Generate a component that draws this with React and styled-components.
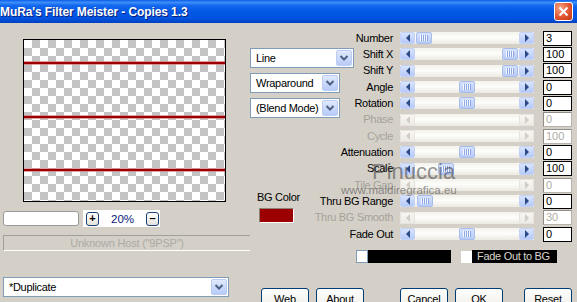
import React from "react";
import styled, { createGlobalStyle } from "styled-components";

const GlobalStyle = createGlobalStyle`
  html, body {
    margin: 0;
    padding: 0;
    background: #d4d0c8;
  }
  body {
    font-family: "Liberation Sans", Arial, sans-serif;
    font-size: 11px;
    color: #000;
  }
  * {
    box-sizing: border-box;
  }
`;

const SLIDERS = [
  { label: "Number", value: "3", pos: 0.012 },
  { label: "Shift X", value: "100", pos: 0.99 },
  { label: "Shift Y", value: "100", pos: 0.99 },
  { label: "Angle", value: "0", pos: 0.5 },
  { label: "Rotation", value: "0", pos: 0.5 },
  { label: "Phase", value: "0", disabled: true },
  { label: "Cycle", value: "100", disabled: true },
  { label: "Attenuation", value: "0", pos: 0.5 },
  { label: "Scale", value: "100", pos: 0.26 },
  { label: "Tile Gap", value: "0", disabled: true },
  { label: "Thru BG Range", value: "0", pos: 0.023 },
  { label: "Thru BG Smooth", value: "30", disabled: true },
  { label: "Fade Out", value: "0", pos: 0.5 },
];

const PREVIEW_LINES = [23, 77, 130];

const Window = styled.div`
  position: relative;
  width: 577px;
  height: 302px;
  overflow: hidden;
  background: #d4d0c8;
  display: flex;
  flex-direction: column;
`;

const TitleBar = styled.div`
  flex: none;
  height: 23px;
  display: flex;
  align-items: center;
  justify-content: space-between;
  padding-right: 4px;
  background: linear-gradient(
    #0a5be8 0%,
    #3d8ff9 10%,
    #1468ee 24%,
    #0358e6 50%,
    #0052de 82%,
    #0040c0 100%
  );
  color: #fff;
  font-weight: bold;
  font-size: 12px;
  letter-spacing: -0.1px;
  text-shadow: 1px 1px #0a1e7a;
  white-space: nowrap;
`;

const CloseButton = styled.div`
  width: 19px;
  height: 19px;
  border: 1px solid #fff;
  border-radius: 3px;
  background: radial-gradient(circle at 30% 30%, #f3a584, #e2532f 55%, #c03916);
  display: flex;
  align-items: center;
  justify-content: center;
`;

const Body = styled.div`
  flex: 1;
  display: flex;
`;

const LeftCol = styled.div`
  flex: none;
  width: 250px;
  padding-left: 3px;
  display: flex;
  flex-direction: column;
`;

const PreviewCanvas = styled.svg`
  display: block;
  margin: 16px 0 0 20px;
`;

const ZoomRow = styled.div`
  display: flex;
  align-items: center;
  height: 17px;
  margin-top: 8px;
`;

const ZoomInput = styled.div`
  width: 76px;
  height: 15px;
  background: #fff;
  border: 1px solid #9a9a9a;
  border-radius: 3px;
`;

const ZoomPad = styled.div`
  display: flex;
  align-items: center;
  width: 77px;
  height: 17px;
  margin-left: 4px;
  padding: 0 1px 0 3px;
  background: #fff;
`;

const ZoomButton = styled.div`
  width: 13px;
  height: 14px;
  border: 1px solid #1c3f73;
  border-radius: 3px;
  background: linear-gradient(#fff, #e4e3dc);
  display: flex;
  align-items: center;
  justify-content: center;
  font-weight: bold;
  font-size: 11px;
  line-height: 1;
`;

const ZoomValue = styled.span`
  flex: 1;
  text-align: center;
  color: #0a1a80;
  font-size: 11.5px;
`;

const StatusBar = styled.div`
  height: 16px;
  margin-top: 8px;
  border-top: 1px solid #a3a09a;
  border-left: 1px solid #a3a09a;
  border-bottom: 1px solid #fff;
  display: flex;
  align-items: center;
  justify-content: center;
  color: #acaaa5;
  letter-spacing: -0.2px;
`;

const Combo = styled.div`
  display: flex;
  align-items: center;
  width: ${(p) => p.$width}px;
  height: 20px;
  margin-top: ${(p) => p.$top || 0}px;
  background: #fff;
  border: 1px solid #7f9db9;
  padding: 1px;
`;

const ComboText = styled.span`
  flex: 1;
  padding-left: 4px;
  letter-spacing: -0.3px;
  white-space: nowrap;
`;

const ComboArrow = styled.div`
  width: 16px;
  height: 16px;
  border: 1px solid #bccbf1;
  border-radius: 2px;
  background: linear-gradient(#e0e9fd, #b7cbf8);
  display: flex;
  align-items: center;
  justify-content: center;
`;

const RightCol = styled.div`
  flex: 1;
  display: flex;
  flex-direction: column;
`;

const ControlArea = styled.div`
  display: grid;
  margin-top: 7px;
  & > * {
    grid-area: 1 / 1;
  }
`;

const SideControls = styled.div`
  display: flex;
  flex-direction: column;
  align-items: flex-start;
  padding-top: 18px;
`;

const ColorLabel = styled.span`
  margin: 73px 0 0 7px;
  line-height: 13px;
  letter-spacing: -0.3px;
`;

const ColorSwatch = styled.div`
  width: 35px;
  height: 15px;
  margin: 4px 0 0 9px;
  background: ${(p) => p.$color};
  border: 1px solid #8a8478;
  border-right-color: #fff;
  border-bottom-color: #fff;
`;

const SliderList = styled.div`
  display: flex;
  flex-direction: column;
`;

const SliderRow = styled.div`
  display: grid;
  grid-template-columns: 150px 143px 29px;
  align-items: center;
  height: 16.33px;
`;

const SliderLabel = styled.span`
  justify-self: end;
  padding-right: 7px;
  line-height: 13px;
  white-space: nowrap;
  letter-spacing: -0.3px;
  color: ${(p) => (p.$disabled ? "#a5a29b" : "#000")};
`;

const ScrollBar = styled.div`
  display: flex;
  width: 134px;
  height: 12px;
  background: linear-gradient(#f3f2ec, #fdfdfb 45%, #ebe9e1);
`;

const ScrollArrow = styled.div`
  flex: none;
  width: 15px;
  height: 12px;
  border: 1px solid ${(p) => (p.$disabled ? "#e6e4dc" : "#c3d2f6")};
  border-radius: 2px;
  background: ${(p) =>
    p.$disabled
      ? "linear-gradient(#f7f6f2, #ecebe5)"
      : "linear-gradient(#d9e4fd, #b6caf8)"};
  display: flex;
  align-items: center;
  justify-content: center;
`;

const ScrollTrack = styled.div`
  position: relative;
  flex: 1;
`;

const Thumb = styled.div`
  position: absolute;
  top: 0;
  width: 16px;
  height: 12px;
  border: 1px solid #a9bdec;
  border-radius: 2px;
  background: linear-gradient(#d6e2fd, #b8ccf8);
  display: flex;
  align-items: center;
  justify-content: center;
  &::after {
    content: "";
    width: 8px;
    height: 6px;
    background: repeating-linear-gradient(90deg, #f4f7ff 0 1px, #8ca6e2 1px 2px);
  }
`;

const ValueBox = styled.div`
  height: 15px;
  background: #fff;
  border: 1px solid ${(p) => (p.$disabled ? "#b5b3ab" : "#000")};
  border-top-color: ${(p) => (p.$disabled ? "#8f8d86" : "#000")};
  border-left-color: ${(p) => (p.$disabled ? "#8f8d86" : "#000")};
  padding-left: 2px;
  line-height: 13px;
  color: ${(p) => (p.$disabled ? "#aeaca4" : "#000")};
`;

const FadeRow = styled.div`
  display: flex;
  align-items: center;
  height: 13px;
  margin-top: 8px;
  padding-left: 106px;
`;

const FadeBar = styled.div`
  width: 95px;
  height: 13px;
  background: #000;
`;

const FadeMark = styled.div`
  width: 12px;
  height: 13px;
  background: #fff;
  border: 1px solid #7f9db9;
`;

const CheckBox = styled.div`
  width: 11px;
  height: 12px;
  margin-left: 10px;
  background: #fff;
`;

const CheckLabel = styled.span`
  height: 13px;
  padding: 0 7px 0 5px;
  background: #000;
  color: #d8d5cd;
  line-height: 13px;
  letter-spacing: -0.3px;
  white-space: nowrap;
`;

const ButtonRow = styled.div`
  display: flex;
  margin-top: 25px;
  padding-left: 11px;
`;

const Button = styled.div`
  flex: none;
  width: 48px;
  height: 23px;
  margin-left: ${(p) => p.$gap || 0}px;
  border: 1px solid #003c74;
  border-radius: 3px;
  background: linear-gradient(#ffffff, #f2f1ec 70%, #dcd8cd);
  display: flex;
  justify-content: center;
  padding-top: 4px;
  letter-spacing: -0.2px;
`;

const Watermark = styled.span`
  position: absolute;
  left: ${(p) => p.$x}px;
  top: ${(p) => p.$y}px;
  font-size: ${(p) => p.$size}px;
  line-height: 1;
  color: rgba(60, 60, 60, 0.55);
  white-space: nowrap;
  pointer-events: none;
`;

const ChevronIcon = () => (
  <svg width="10" height="8" viewBox="0 0 10 8">
    <path d="M1.5 2 L5 5.5 L8.5 2" fill="none" stroke="#4d6185" strokeWidth="2" />
  </svg>
);

const ArrowIcon = ({ dir, disabled }) => (
  <svg width="6" height="8" viewBox="0 0 6 8">
    <path
      d={dir === "left" ? "M5 0 L1 4 L5 8 Z" : "M1 0 L5 4 L1 8 Z"}
      fill={disabled ? "#cfcdc4" : "#2c4a86"}
    />
  </svg>
);

const ComboBox = ({ width, top, children }) => (
  <Combo $width={width} $top={top}>
    <ComboText>{children}</ComboText>
    <ComboArrow>
      <ChevronIcon />
    </ComboArrow>
  </Combo>
);

const Slider = ({ label, value, pos, disabled }) => (
  <SliderRow>
    <SliderLabel $disabled={disabled}>{label}</SliderLabel>
    <ScrollBar>
      <ScrollArrow $disabled={disabled}>
        <ArrowIcon dir="left" disabled={disabled} />
      </ScrollArrow>
      <ScrollTrack>
        {!disabled && <Thumb style={{ left: Math.round(pos * 88) }} />}
      </ScrollTrack>
      <ScrollArrow $disabled={disabled}>
        <ArrowIcon dir="right" disabled={disabled} />
      </ScrollArrow>
    </ScrollBar>
    <ValueBox $disabled={disabled}>{value}</ValueBox>
  </SliderRow>
);

const Preview = () => (
  <PreviewCanvas width="203" height="163" viewBox="0 0 203 163">
    <defs>
      <pattern id="checker" x="1" y="1" width="16" height="16" patternUnits="userSpaceOnUse">
        <rect width="16" height="16" fill="#fff" />
        <rect x="8" width="8" height="8" fill="#c3c3c3" />
        <rect y="8" width="8" height="8" fill="#c3c3c3" />
      </pattern>
    </defs>
    <rect x="0.5" y="0.5" width="202" height="162" fill="url(#checker)" stroke="#000" />
    {PREVIEW_LINES.map((y) => (
      <g key={y}>
        <rect x="1" y={y - 1} width="201" height="4" fill="#d77a7a" opacity="0.7" />
        <rect x="1" y={y} width="201" height="2" fill="#9c0000" />
      </g>
    ))}
  </PreviewCanvas>
);

export default function App() {
  return (
    <>
      <GlobalStyle />
      <Window>
        <TitleBar>
          <span>MuRa's Filter Meister - Copies 1.3</span>
          <CloseButton>
            <svg width="11" height="11" viewBox="0 0 11 11">
              <path d="M1.5 1.5 L9.5 9.5 M9.5 1.5 L1.5 9.5" stroke="#fff" strokeWidth="2" />
            </svg>
          </CloseButton>
        </TitleBar>
        <Body>
          <LeftCol>
            <Preview />
            <ZoomRow>
              <ZoomInput />
              <ZoomPad>
                <ZoomButton>+</ZoomButton>
                <ZoomValue>20%</ZoomValue>
                <ZoomButton>–</ZoomButton>
              </ZoomPad>
            </ZoomRow>
            <StatusBar>Unknown Host ("9PSP")</StatusBar>
            <Combo $width={226} $top={26}>
              <ComboText>*Duplicate</ComboText>
              <ComboArrow>
                <ChevronIcon />
              </ComboArrow>
            </Combo>
          </LeftCol>
          <RightCol>
            <ControlArea>
              <SideControls>
                <ComboBox width={104}>Line</ComboBox>
                <ComboBox width={90} top={5}>Wraparound</ComboBox>
                <ComboBox width={90} top={5}>(Blend Mode)</ComboBox>
                <ColorLabel>BG Color</ColorLabel>
                <ColorSwatch $color="#9c0000" />
              </SideControls>
              <SliderList>
                {SLIDERS.map((s) => (
                  <Slider key={s.label} {...s} />
                ))}
              </SliderList>
            </ControlArea>
            <FadeRow>
              <FadeBar>
                <FadeMark />
              </FadeBar>
              <CheckBox />
              <CheckLabel>Fade Out to BG</CheckLabel>
            </FadeRow>
            <ButtonRow>
              <Button>Web</Button>
              <Button $gap={7}>About</Button>
              <Button $gap={36}>Cancel</Button>
              <Button $gap={7}>OK</Button>
              <Button $gap={21}>Reset</Button>
            </ButtonRow>
          </RightCol>
        </Body>
        <Watermark $x={372} $y={161} $size={22}>Pinuccia</Watermark>
        <Watermark $x={341} $y={185} $size={11.5}>www.maidiregrafica.eu</Watermark>
      </Window>
    </>
  );
}
